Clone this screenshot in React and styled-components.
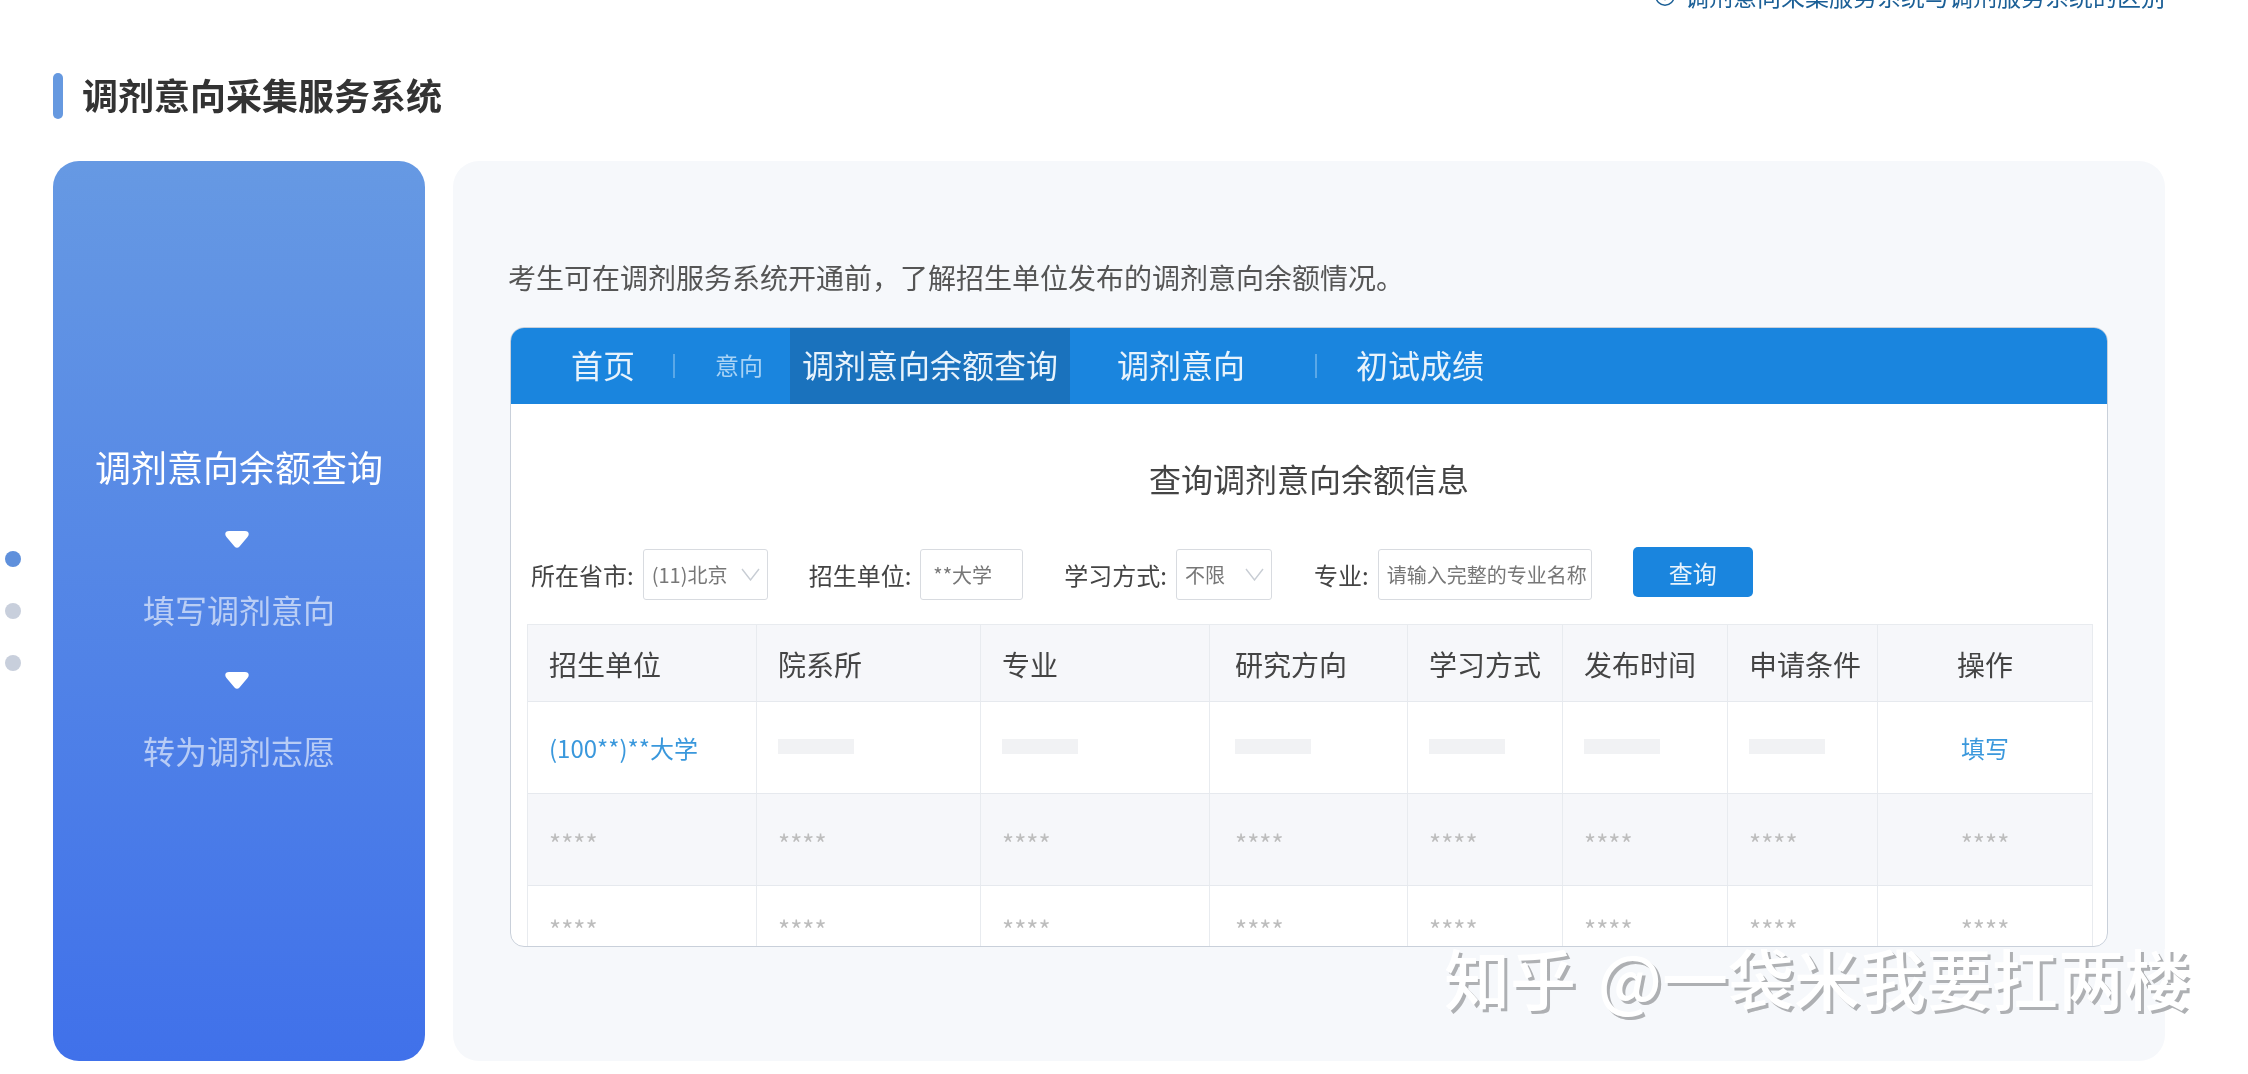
import React from "react";
import styled, { createGlobalStyle } from "styled-components";
import { Info } from "lucide-react";

const GlobalStyle = createGlobalStyle`
  html, body {
    margin: 0;
    padding: 0;
    background: #fff;
    font-family: "Noto Sans CJK SC", "Liberation Sans", sans-serif;
  }
  * {
    box-sizing: border-box;
  }
`;

const Page = styled.div`
  position: relative;
  width: 2248px;
  height: 1074px;
  overflow: hidden;
  background: #fff;
  filter: blur(0.5px);
`;

const Note = styled.div`
  display: flex;
  justify-content: flex-end;
  align-items: center;
  gap: 9px;
  height: 34px;
  margin-top: -21px;
  padding-right: 83px;
  font-size: 24px;
  line-height: 34px;
  color: #1b5f96;
`;

const TitleRow = styled.div`
  display: flex;
  align-items: center;
  gap: 19px;
  height: 46px;
  margin: 60px 0 42px 53px;
`;

const TitleBar = styled.span`
  width: 10px;
  height: 46px;
  border-radius: 5px;
  background: #6699e0;
`;

const Title = styled.h1`
  margin: 0;
  padding-bottom: 4px;
  font-size: 36px;
  line-height: 46px;
  font-weight: 700;
  color: #333;
`;

const Body = styled.div`
  display: flex;
  align-items: center;
  height: 900px;
`;

const DotRail = styled.div`
  display: flex;
  flex-direction: column;
  gap: 36px;
  width: 53px;
  padding-left: 5px;
`;

const Dot = styled.span`
  width: 16px;
  height: 16px;
  border-radius: 50%;
  background: ${(props) => (props.$active ? "#5f90dc" : "#c8cfdc")};
`;

const Steps = styled.div`
  display: flex;
  flex-direction: column;
  align-items: center;
  justify-content: center;
  width: 372px;
  height: 900px;
  margin-right: 28px;
  padding-bottom: 9px;
  border-radius: 26px;
  background: linear-gradient(180deg, #6699e3 0%, #4071ea 100%);
`;

const Step = styled.div`
  font-size: ${(props) => (props.$active ? "36px" : "32px")};
  line-height: ${(props) => (props.$active ? "50px" : "46px")};
  color: ${(props) => (props.$active ? "#fff" : "rgba(255, 255, 255, 0.6)")};
`;

const ArrowIcon = styled.svg`
  display: block;
  width: 24px;
  height: 17px;
  margin: 40px 5px 38px 0;
`;

const Panel = styled.div`
  width: 1712px;
  height: 900px;
  padding: 96px 0 0 57px;
  border-radius: 26px;
  background: #f6f8fb;
`;

const Lead = styled.p`
  margin: 0 0 30px -2px;
  font-size: 28px;
  line-height: 40px;
  color: #555;
`;

const Shot = styled.div`
  width: 1598px;
  height: 620px;
  overflow: hidden;
  border: 1px solid #c9d0da;
  border-radius: 14px;
  background: #fff;
  filter: blur(0.4px);
`;

const Nav = styled.div`
  display: flex;
  align-items: center;
  height: 76px;
  padding-left: 60px;
  background: #1a85de;
`;

const NavItem = styled.div`
  display: flex;
  align-items: center;
  justify-content: center;
  height: 76px;
  padding-bottom: 4px;
  margin-left: ${(props) => props.$left || 0}px;
  width: ${(props) => (props.$active ? "280px" : "auto")};
  font-size: ${(props) => (props.$small ? "24px" : "32px")};
  color: ${(props) => (props.$small ? "#a9d3f5" : "#e8f3fc")};
  background: ${(props) => (props.$active ? "#1a72bd" : "transparent")};
`;

const NavDivider = styled.span`
  width: 2px;
  height: 24px;
  margin-left: ${(props) => props.$left}px;
  background: #5aa8e8;
`;

const Heading = styled.h2`
  margin: 52px 0 49px;
  font-size: 32px;
  line-height: 44px;
  font-weight: 400;
  text-align: center;
  color: #444;
`;

const Filters = styled.div`
  display: flex;
  align-items: center;
  height: 51px;
  padding-left: 20px;
`;

const FilterLabel = styled.span`
  margin-left: ${(props) => props.$left || 0}px;
  margin-right: 9px;
  font-size: 24px;
  color: #444;
  white-space: nowrap;
`;

const Field = styled.div`
  display: flex;
  align-items: center;
  justify-content: space-between;
  width: ${(props) => props.$width}px;
  height: 51px;
  padding: 0 7px 0 ${(props) => props.$pad || 8}px;
  border: 1px solid #d8dbe0;
  border-radius: 3px;
  background: #fff;
  font-size: 20px;
  color: #777;
  white-space: nowrap;
`;

const Chevron = styled.svg`
  width: 19px;
  height: 13px;
  fill: none;
  stroke: #c8cdd4;
  stroke-width: 1.4;
`;

const SearchButton = styled.button`
  width: 120px;
  height: 50px;
  margin: 0 0 5px 41px;
  border: 0;
  border-radius: 5px;
  background: #1a85de;
  color: #e8f3fc;
  font-family: inherit;
  font-size: 24px;
`;

const Table = styled.div`
  width: 1566px;
  margin: 24px 0 0 16px;
  border-top: 1px solid #e8ebef;
  border-left: 1px solid #e8ebef;
  border-right: 1px solid #e8ebef;
`;

const Row = styled.div`
  display: grid;
  grid-template-columns: 229px 224px 229px 198px 155px 165px 150px 1fr;
  height: ${(props) => props.$height}px;
  border-bottom: 1px solid #e6e9ee;
  background: ${(props) => (props.$shade ? "#f6f7fa" : "#fff")};
`;

const Cell = styled.div`
  display: flex;
  align-items: center;
  justify-content: ${(props) => (props.$center ? "center" : "flex-start")};
  padding-left: ${(props) => (props.$center ? "0" : "21px")};
  padding-top: ${(props) => (props.$star ? "6px" : props.$head ? "2px" : "0")};
  border-right: 1px solid #e8ebef;
  font-size: ${(props) => (props.$head ? "28px" : props.$star ? "26px" : "24px")};
  color: ${(props) => (props.$head ? "#444" : props.$link ? "#3a98dc" : "#bdbdbd")};

  &:nth-child(4) {
    padding-left: 25px;
  }

  &:last-child {
    border-right: 0;
  }
`;

const Masked = styled.span`
  width: 76px;
  height: 15px;
  margin-bottom: 2px;
  background: #f1f2f4;
`;

const Watermark = styled.div`
  position: absolute;
  right: 58px;
  top: 931px;
  font-size: 66px;
  line-height: 90px;
  font-weight: 500;
  word-spacing: 7px;
  color: #fff;
  text-shadow: 3px 3px 0 #aeb0b3;
  white-space: nowrap;
`;

const heads = ["招生单位", "院系所", "专业", "研究方向", "学习方式", "发布时间", "申请条件"];

function Arrow() {
  return (
    <ArrowIcon viewBox="0 0 24 17">
      <path
        fill="#fff"
        d="M4 0H20C23.5 0 25 3 22.5 6L14.5 15.5C13 17.3 11 17.3 9.5 15.5L1.5 6C-1 3 .5 0 4 0Z"
      />
    </ArrowIcon>
  );
}

function Caret() {
  return (
    <Chevron viewBox="0 0 19 13">
      <polyline points="1,1 9.5,12 18,1" />
    </Chevron>
  );
}

function StarRow({ shade, height }) {
  return (
    <Row $shade={shade} $height={height}>
      {heads.map((head) => (
        <Cell $star key={head}>****</Cell>
      ))}
      <Cell $star $center>****</Cell>
    </Row>
  );
}

export default function App() {
  return (
    <Page>
      <GlobalStyle />
      <Note>
        <Info size={22} strokeWidth={1.6} />
        <span>调剂意向采集服务系统与调剂服务系统的区别</span>
      </Note>
      <TitleRow>
        <TitleBar />
        <Title>调剂意向采集服务系统</Title>
      </TitleRow>
      <Body>
        <DotRail>
          <Dot $active />
          <Dot />
          <Dot />
        </DotRail>
        <Steps>
          <Step $active>调剂意向余额查询</Step>
          <Arrow />
          <Step>填写调剂意向</Step>
          <Arrow />
          <Step>转为调剂志愿</Step>
        </Steps>
        <Panel>
          <Lead>考生可在调剂服务系统开通前，了解招生单位发布的调剂意向余额情况。</Lead>
          <Shot>
            <Nav>
              <NavItem>首页</NavItem>
              <NavDivider $left={38} />
              <NavItem $small $left={40}>意向</NavItem>
              <NavItem $active $left={27}>调剂意向余额查询</NavItem>
              <NavItem $left={47}>调剂意向</NavItem>
              <NavDivider $left={70} />
              <NavItem $left={39}>初试成绩</NavItem>
            </Nav>
            <Heading>查询调剂意向余额信息</Heading>
            <Filters>
              <FilterLabel>所在省市:</FilterLabel>
              <Field $width={125}>
                (11)北京
                <Caret />
              </Field>
              <FilterLabel $left={41}>招生单位:</FilterLabel>
              <Field $width={103} $pad={12}>**大学</Field>
              <FilterLabel $left={41}>学习方式:</FilterLabel>
              <Field $width={96}>
                不限
                <Caret />
              </Field>
              <FilterLabel $left={42}>专业:</FilterLabel>
              <Field $width={214}>请输入完整的专业名称</Field>
              <SearchButton>查询</SearchButton>
            </Filters>
            <Table>
              <Row $shade $height={77}>
                {heads.map((head) => (
                  <Cell $head key={head}>{head}</Cell>
                ))}
                <Cell $head $center>操作</Cell>
              </Row>
              <Row $height={92}>
                <Cell $link>(100**)**大学</Cell>
                {heads.slice(1).map((head) => (
                  <Cell key={head}>
                    <Masked />
                  </Cell>
                ))}
                <Cell $link $center>填写</Cell>
              </Row>
              <StarRow shade height={92} />
              <StarRow height={80} />
            </Table>
          </Shot>
        </Panel>
      </Body>
      <Watermark>知乎 @一袋米我要扛两楼</Watermark>
    </Page>
  );
}
